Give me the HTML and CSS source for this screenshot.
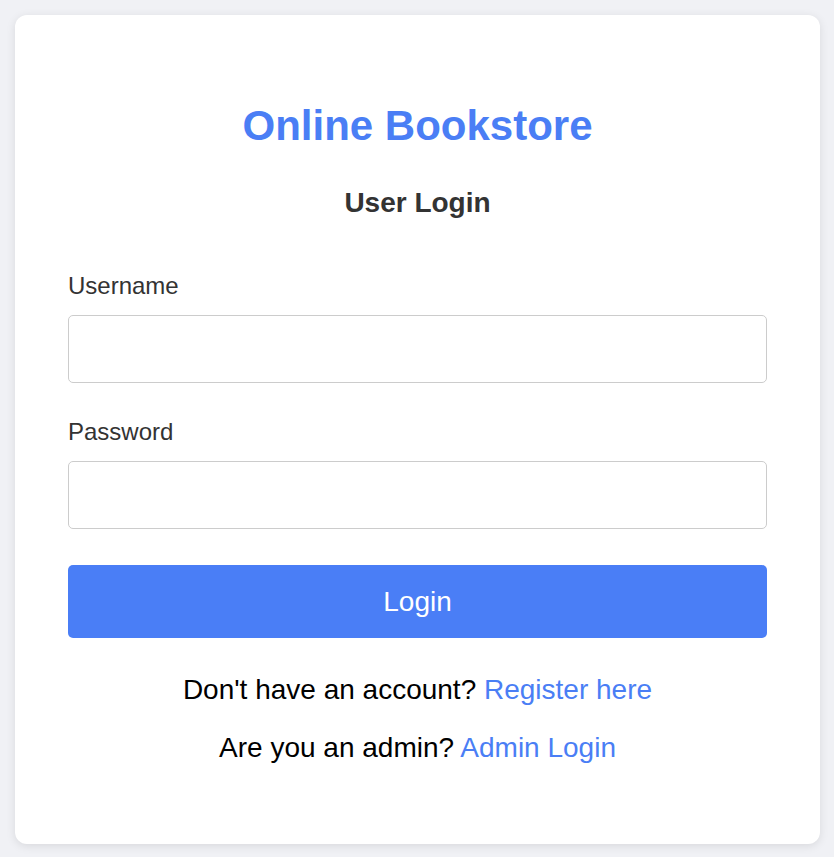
FILE: index.html
```html
<!DOCTYPE html>
<html lang="en">
<head>
<meta charset="utf-8">
<title>Online Bookstore - User Login</title>
<link rel="stylesheet" href="styles.css">
</head>
<body>
<main class="card">
  <h1 class="brand">Online Bookstore</h1>
  <h2 class="subtitle">User Login</h2>
  <form class="form">
    <div class="field">
      <label class="label" for="username">Username</label>
      <input class="input" id="username" type="text">
    </div>
    <div class="field">
      <label class="label" for="password">Password</label>
      <input class="input" id="password" type="password">
    </div>
    <button class="btn" type="button">Login</button>
  </form>
  <p class="note note-first">Don't have an account? <a class="link" href="#">Register here</a></p>
  <p class="note">Are you an admin? <a class="link" href="#">Admin Login</a></p>
</main>
</body>
</html>
```
FILE: styles.css
```css
html, body {
  margin: 0;
  background: #f0f1f5;
}
body {
  padding: 15px 14px 12px 15px;
  font-family: "Liberation Sans", Arial, sans-serif;
  color: #333;
}
.card {
  background: #fff;
  border-radius: 12px;
  box-shadow: 0 2px 10px rgba(0, 0, 0, 0.1);
  padding: 87px 53px 80px;
}
.brand {
  margin: 0;
  font-size: 42px;
  font-weight: bold;
  color: #4a7ef5;
  text-align: center;
  line-height: normal;
}
.subtitle {
  margin: 37px 0 0;
  font-size: 28px;
  font-weight: bold;
  color: #333;
  text-align: center;
  line-height: normal;
}
.form {
  margin-top: 53px;
  display: flex;
  flex-direction: column;
}
.field {
  display: flex;
  flex-direction: column;
  margin-bottom: 35px;
}
.field + .field {
  margin-bottom: 36px;
}
.label {
  font-size: 24px;
  color: #333;
  margin-bottom: 15px;
  line-height: normal;
}
.input {
  height: 68px;
  box-sizing: border-box;
  border: 1px solid #ccc;
  border-radius: 5px;
  padding: 10px 14px;
  font-size: 24px;
  font-family: inherit;
  background: #fff;
}
.btn {
  height: 73px;
  border: none;
  border-radius: 5px;
  background: #4a7ef6;
  color: #fff;
  font-family: inherit;
  font-size: 28px;
  cursor: pointer;
}
.note {
  margin: 26px 0 0;
  text-align: center;
  font-size: 28px;
  color: #000;
  line-height: normal;
}
.note-first {
  margin-top: 36px;
}
.link {
  color: #4a7ef5;
  text-decoration: none;
}
```
